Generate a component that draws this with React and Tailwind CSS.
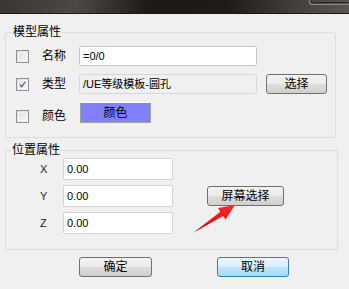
import React from 'react';

const cjk = "font-['Liberation_Sans','Noto_Sans_CJK_SC',sans-serif]";

const Check = ({ checked }) => (
  <div className="w-[13px] h-[13px] shrink-0 border border-[#8e8f8f] bg-[linear-gradient(135deg,#dcdcdc,#f8f8f8)] p-[1px]">
    <div className="w-full h-full border border-[#f4f4f4] flex items-center justify-center">
      {checked && (
        <svg width="9" height="9" viewBox="0 0 9 9">
          <path d="M1 4.5 L3.5 7.5 L8 1" fill="none" stroke="#4a5c99" strokeWidth="1.6" />
        </svg>
      )}
    </div>
  </div>
);

const Btn = ({ children, className = '', focus }) => (
  <button
    className={
      'flex items-center justify-center rounded-[3px] border text-[12px] leading-[14px] text-black ' +
      cjk + ' ' +
      (focus
        ? 'border-[#3c7fb1] bg-[linear-gradient(180deg,#eaf6fd_0%,#d9f0fc_50%,#bee6fd_51%,#a7d9f5_100%)] '
        : 'border-[#707070] bg-[linear-gradient(180deg,#f2f2f2_0%,#ebebeb_50%,#dddddd_51%,#cfcfcf_100%)] ') +
      className
    }
  >
    {children}
  </button>
);

const Field = ({ value, className = '' }) => (
  <div
    className={
      'h-full flex items-center pl-[3px] rounded-[2px] border text-[11px] leading-[13px] text-black ' +
      cjk + ' ' + className
    }
  >
    {value}
  </div>
);

export default function App() {
  return (
    <div className={'relative w-[349px] h-[289px] overflow-hidden bg-[#f0f0f0] ' + cjk}>
      <div className="h-[14px] flex justify-end border-b border-[#1b1815] bg-[linear-gradient(90deg,#3b3631_0%,#4d4843_22%,#1f1a16_42%,#201b17_65%,#45403b_85%,#5b5651_100%)]">
        <div className="w-[40px] h-[5px] rounded-bl-[3px] border-l border-b border-[#8e8984] p-[1px]">
          <div className="w-full h-full rounded-bl-[2px] border-l border-b border-[#2a2622]" />
        </div>
      </div>

      <fieldset className="ml-[5px] mt-[11px] w-[331px] border border-[#d5dfe5] rounded-[3px] pb-[14px]">
        <legend className="ml-[6px] px-[1px] text-[12px] leading-[14px] text-black">模型属性</legend>
        <div className="flex flex-col gap-[8px] pt-[7px]">
          <div className="flex items-center h-[20px]">
            <div className="ml-[10px]"><Check /></div>
            <span className="ml-[13px] w-[37px] text-[12px] leading-[14px]">名称</span>
            <div className="w-[178px] h-[20px]">
              <Field value="=0/0" className="bg-white border-[#c9c9c9]" />
            </div>
          </div>
          <div className="flex items-center h-[20px]">
            <div className="ml-[10px]"><Check checked /></div>
            <span className="ml-[13px] w-[37px] text-[12px] leading-[14px]">类型</span>
            <div className="w-[178px] h-[20px]">
              <Field value="/UE等级模板-圆孔" className="bg-[#f0f0f0] border-[#d6d6d6]" />
            </div>
            <Btn className="ml-[9px] w-[61px] h-[20px]">选择</Btn>
          </div>
          <div className="flex items-center h-[21px]">
            <div className="ml-[10px] self-end"><Check /></div>
            <span className="ml-[13px] w-[38px] self-end text-[12px] leading-[14px]">颜色</span>
            <div className="w-[71px] h-[21px] flex items-center justify-center bg-[#8080ff] border border-t-[#ffffff] border-l-[#a0a0a0] border-r-[#a0a0a0] border-b-[#a0a0a0] text-[12px] leading-[14px] text-black">
              颜色
            </div>
          </div>
        </div>
      </fieldset>

      <fieldset className="ml-[5px] mt-[5px] w-[333px] border border-[#d5dfe5] rounded-[3px] pb-[15px]">
        <legend className="ml-[5px] px-[1px] text-[12px] leading-[14px] text-black">位置属性</legend>
        <div className="flex flex-col gap-[5px] pt-[1px]">
          {['X', 'Y', 'Z'].map((k) => (
            <div key={k} className="flex items-center h-[22px]">
              <span className="ml-[34px] w-[23px] text-[11px] leading-[13px] text-[#1c1c3c]">{k}</span>
              <div className="w-[110px] h-[22px]">
                <Field value="0.00" className="bg-white border-[#d3d3d3]" />
              </div>
              {k === 'Y' && <Btn className="ml-[34px] w-[77px] h-[20px]">屏幕选择</Btn>}
            </div>
          ))}
        </div>
      </fieldset>

      <div className="flex mt-[7px]">
        <Btn className="ml-[79px] w-[73px] h-[20px]">确定</Btn>
        <Btn focus className="ml-[65px] w-[72px] h-[20px]">取消</Btn>
      </div>

      <svg className="absolute left-0 top-0 pointer-events-none" width="349" height="289">
        <defs>
          <linearGradient id="ar" x1="0" y1="1" x2="1" y2="0">
            <stop offset="0" stopColor="#e00000" />
            <stop offset="1" stopColor="#ff2a2a" />
          </linearGradient>
        </defs>
        <polygon
          points="193,233 220.3,211.7 217.9,208 235,205 225.5,219.6 223.1,215.9"
          fill="url(#ar)"
        />
      </svg>
    </div>
  );
}
